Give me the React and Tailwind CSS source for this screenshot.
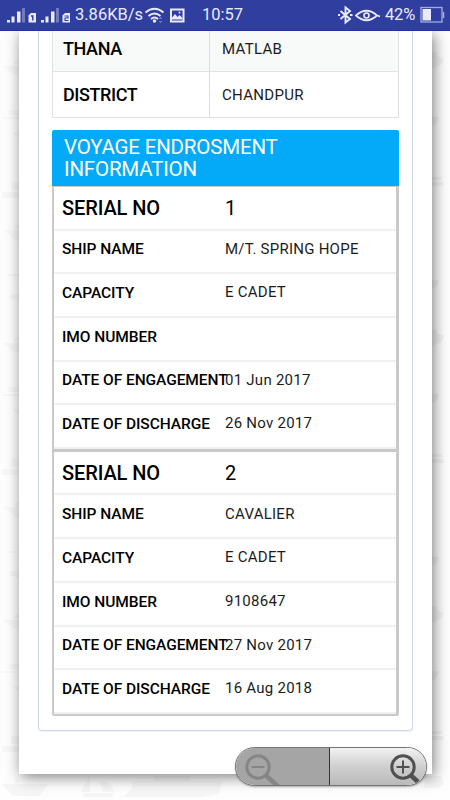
import { twMerge } from "tailwind-merge";

const address = [
  { label: "THANA", value: "MATLAB" },
  { label: "DISTRICT", value: "CHANDPUR" },
];

const voyages = [
  {
    serial: "1",
    rows: [
      { label: "SHIP NAME", value: "M/T. SPRING HOPE" },
      { label: "CAPACITY", value: "E CADET" },
      { label: "IMO NUMBER", value: "" },
      { label: "DATE OF ENGAGEMENT", value: "01 Jun 2017" },
      { label: "DATE OF DISCHARGE", value: "26 Nov 2017" },
    ],
  },
  {
    serial: "2",
    rows: [
      { label: "SHIP NAME", value: "CAVALIER" },
      { label: "CAPACITY", value: "E CADET" },
      { label: "IMO NUMBER", value: "9108647" },
      { label: "DATE OF ENGAGEMENT", value: "27 Nov 2017" },
      { label: "DATE OF DISCHARGE", value: "16 Aug 2018" },
    ],
  },
];

function StatusBar() {
  return (
    <div className="relative z-10 flex h-[31px] w-full items-center border-b border-[#2033a4] bg-[#303f9f] text-[#e9ebfa]">
      <svg className="shrink-0" width="74" height="31" viewBox="0 0 74 31" fill="#e9ebfa">
        <path d="M7 20h3v2.500H7zM11.500 16.500h3v6h-3zM17 11.500h3.500v11H17z" />
        <path d="M22 8h3v14.500h-3z" fill="#6f7ac1" />
        <path d="M31 13h5v9.500h-7.500v-7z" />
        <path d="M31 16h1.800v4.500" fill="none" stroke="#303f9f" strokeWidth="1.400" />
        <path d="M41 20h3v2.500h-3zM45.500 16.500h3v6h-3zM51 11.500h3.500v11H51z" />
        <path d="M56 8h3v14.500h-3z" fill="#6f7ac1" />
        <path d="M65 13h5v9.500h-7.500v-7z" />
        <path d="M64.500 16h3.500v2h-3v2.500h3.500" fill="none" stroke="#303f9f" strokeWidth="1.100" />
      </svg>
      <span className="ml-[1px] w-[69px] whitespace-nowrap text-[16.500px] leading-none">3.86KB/s</span>
      <svg className="shrink-0" width="42" height="31" viewBox="0 0 42 31" fill="none" stroke="#e9ebfa" strokeWidth="1.900">
        <path d="M1.500 12.500Q10.500 5 19.500 12.500M4.500 16q6-5 12 0M7 19q3.500-3 7 0" />
        <circle cx="10.500" cy="21" r="1.800" fill="#e9ebfa" stroke="none" />
        <path d="M15.500 19l1-1.500 1 1.500M15.500 21l1 1.500 1-1.500" stroke="#8d97d3" strokeWidth="1" />
        <rect x="27" y="9.500" width="12.500" height="12" strokeWidth="2" />
        <path d="M28 19.500v-2l3-3.500 2.500 3 2-2 3 3v1.500z" fill="#e9ebfa" stroke="none" />
        <circle cx="35.500" cy="12.500" r="1" fill="#e9ebfa" stroke="none" />
      </svg>
      <span className="ml-[16px] w-[45px] whitespace-nowrap text-[16.500px] leading-none">10:57</span>
      <svg className="ml-[91px] shrink-0" width="45" height="31" viewBox="0 0 45 31" fill="none" stroke="#e9ebfa" strokeWidth="1.900">
        <path d="M2.500 11l9.500 8-4.500 3.500v-15L12 11l-9.500 8M0 15h2M12 15h2.500" />
        <path d="M18 15.500Q28.500 6 39 15.500Q28.500 25 18 15.500zM38 15l4 1.500" strokeWidth="1.700" />
        <circle cx="28.500" cy="15.500" r="2.500" strokeWidth="1.600" />
      </svg>
      <span className="ml-[2px] w-[34px] whitespace-nowrap text-[16.500px] leading-none tracking-[-0.2px]">42%</span>
      <svg className="shrink-0" width="26" height="31" viewBox="0 0 26 31">
        <rect x="2" y="7.500" width="21" height="14.500" fill="none" stroke="#a5addf" strokeWidth="1.300" />
        <path d="M3.500 9h8.500v11.500H3.500z" fill="#e9ebfa" />
        <path d="M24.500 12v6" stroke="#a5addf" strokeWidth="1.500" />
      </svg>
    </div>
  );
}

// faint ships repeated behind the paper
function ShipBackdrop() {
  return (
    <svg className="absolute inset-0" width="450" height="800" viewBox="0 0 450 800">
      <defs>
        <pattern id="left" width="19" height="277" patternUnits="userSpaceOnUse">
          <g fill="#f8f8f8">
            <path d="M3 66h16v9q-7 0-11-5zM14 62l5-3v5h-5z" />
            <path d="M2 117h17v2H2zM9 110h10v5H9zM13 132h6v5q-4 0-6-5z" />
            <path d="M2 192h17v6H2zM11 182h8v8h-8z" />
            <path d="M3 230h16v11q-8-2-11-8zM15 225h4v4h-4z" />
            <path d="M10 17h9v5h-9zM13 20h6v5zM8 274h11v2H8z" />
          </g>
        </pattern>
        <pattern id="right" width="18" height="277" patternUnits="userSpaceOnUse" x="432">
          <g fill="#f4f4f4">
            <path d="M0 52l5 1v3l7 3-3 6-9 4z" />
            <path d="M0 117h7q-2 9-7 9z" />
            <path d="M0 177h10v3H0zM0 182h11l1 4H0z" />
            <path d="M0 3h7q-1 8-7 8z" />
          </g>
        </pattern>
      </defs>
      <rect width="19" height="800" fill="url(#left)" />
      <rect x="432" width="18" height="800" fill="url(#right)" />
      <g fill="#f6f6f6">
        <path d="M2 784h46l-8 12H13zM81 792l9-17v17zM100 782q10-4 14 10h-11zM82 793h33l-5 4H84zM123 797l9-8v-8h22v-5h36v5h32l-3 13-17 3z" />
        <path d="M425 776h16l3 8-6 4h-14z" />
      </g>
    </svg>
  );
}

function VoyageCard({ voyage, className }) {
  return (
    <div className={twMerge("border-t border-r-[3px] border-b-2 border-l-2 border-[#c9c9c9] bg-white", className)}>
      <div className="flex h-[43.500px] items-center border-b-2 border-[#f0f0f0] pl-2 text-[20px]">
        <span className="w-[163px] font-medium tracking-[-0.1px]">SERIAL NO</span>
        <span>{voyage.serial}</span>
      </div>
      {voyage.rows.map((row) => (
        <div
          key={row.label}
          className="flex h-[43.700px] items-center border-b-2 border-[#f0f0f0] pb-[3px] pl-2"
        >
          <span className="w-[163px] shrink-0 whitespace-nowrap text-[15.500px] font-medium tracking-[-0.06px]">
            {row.label}
          </span>
          <span className="relative -top-px whitespace-nowrap text-[15px] tracking-[0.25px] text-[#1c1c1c]">
            {row.value}
          </span>
        </div>
      ))}
    </div>
  );
}

function Magnifier({ plus, color }) {
  return (
    <svg width="38" height="38" viewBox="0 0 38 38" fill="none" stroke={color}>
      <circle cx="15" cy="19" r="11.200" strokeWidth="3" />
      <path d="M23 27.500l12 11" strokeWidth="4.500" />
      <path d={plus ? "M8.500 19h13M15 12.500v13" : "M8.500 19h13"} strokeWidth="2" />
    </svg>
  );
}

function ZoomControls() {
  return (
    <div className="absolute top-[747px] left-[235px] flex h-[39px] w-[192px] overflow-hidden rounded-full border border-[#737373] bg-white shadow-[0_1px_2px_rgba(0,0,0,0.3)]">
      <button className="flex h-full w-[95px] items-center border-r border-[#333] bg-[#a5a5a5] pl-[7px]">
        <Magnifier color="#858585" />
      </button>
      <button className="flex h-full flex-1 items-center bg-linear-to-b from-[#f2f2f2] via-[#cfcfcf] to-[#bababa] pl-[58px]">
        <Magnifier plus color="#505050" />
      </button>
    </div>
  );
}

export default function App() {
  return (
    <div className="relative h-[800px] w-[450px] overflow-hidden bg-[#fefefe] font-[Roboto,sans-serif] text-black">
      <ShipBackdrop />
      <StatusBar />
      <main className="relative ml-[19px] h-[743px] w-[413px] bg-white px-[19px] shadow-[2px_3px_14px_rgba(0,0,0,0.5)]">
        <div className="h-[700px] rounded-b border border-t-0 border-[#ccd9eb] px-[13px] shadow-[0_1px_2px_rgba(0,0,0,0.06)]">
          <div className="border-x border-[#e1e1e1]">
            {address.map((row, i) => (
              <div
                key={row.label}
                className="flex border-b border-[#e1e1e1] first:h-[41px] first:bg-[#f8f9f9] last:h-[46px]"
              >
                <div className="flex w-[157px] items-center border-r border-[#dedede] pl-[10px] text-[18px] font-medium tracking-[-0.4px]">
                  <span className={i === 0 ? "-mt-[6px]" : ""}>{row.label}</span>
                </div>
                <div className="flex items-center pl-[12px] text-[15px] tracking-[0.3px] text-[#1c1c1c]">
                  <span className={i === 0 ? "-mt-1" : "mt-0.5"}>{row.value}</span>
                </div>
              </div>
            ))}
          </div>
          <h2 className="mt-3 h-[56px] rounded-t-xs bg-[#04a9f7] pt-[7px] pl-3 text-[20.500px] leading-[21.500px] tracking-[-0.18px] text-white">
            VOYAGE ENDROSMENT
            <br />
            INFORMATION
          </h2>
          {voyages.map((voyage) => (
            <VoyageCard key={voyage.serial} voyage={voyage} className="last:rounded-b-xs" />
          ))}
        </div>
      </main>
      <ZoomControls />
    </div>
  );
}
